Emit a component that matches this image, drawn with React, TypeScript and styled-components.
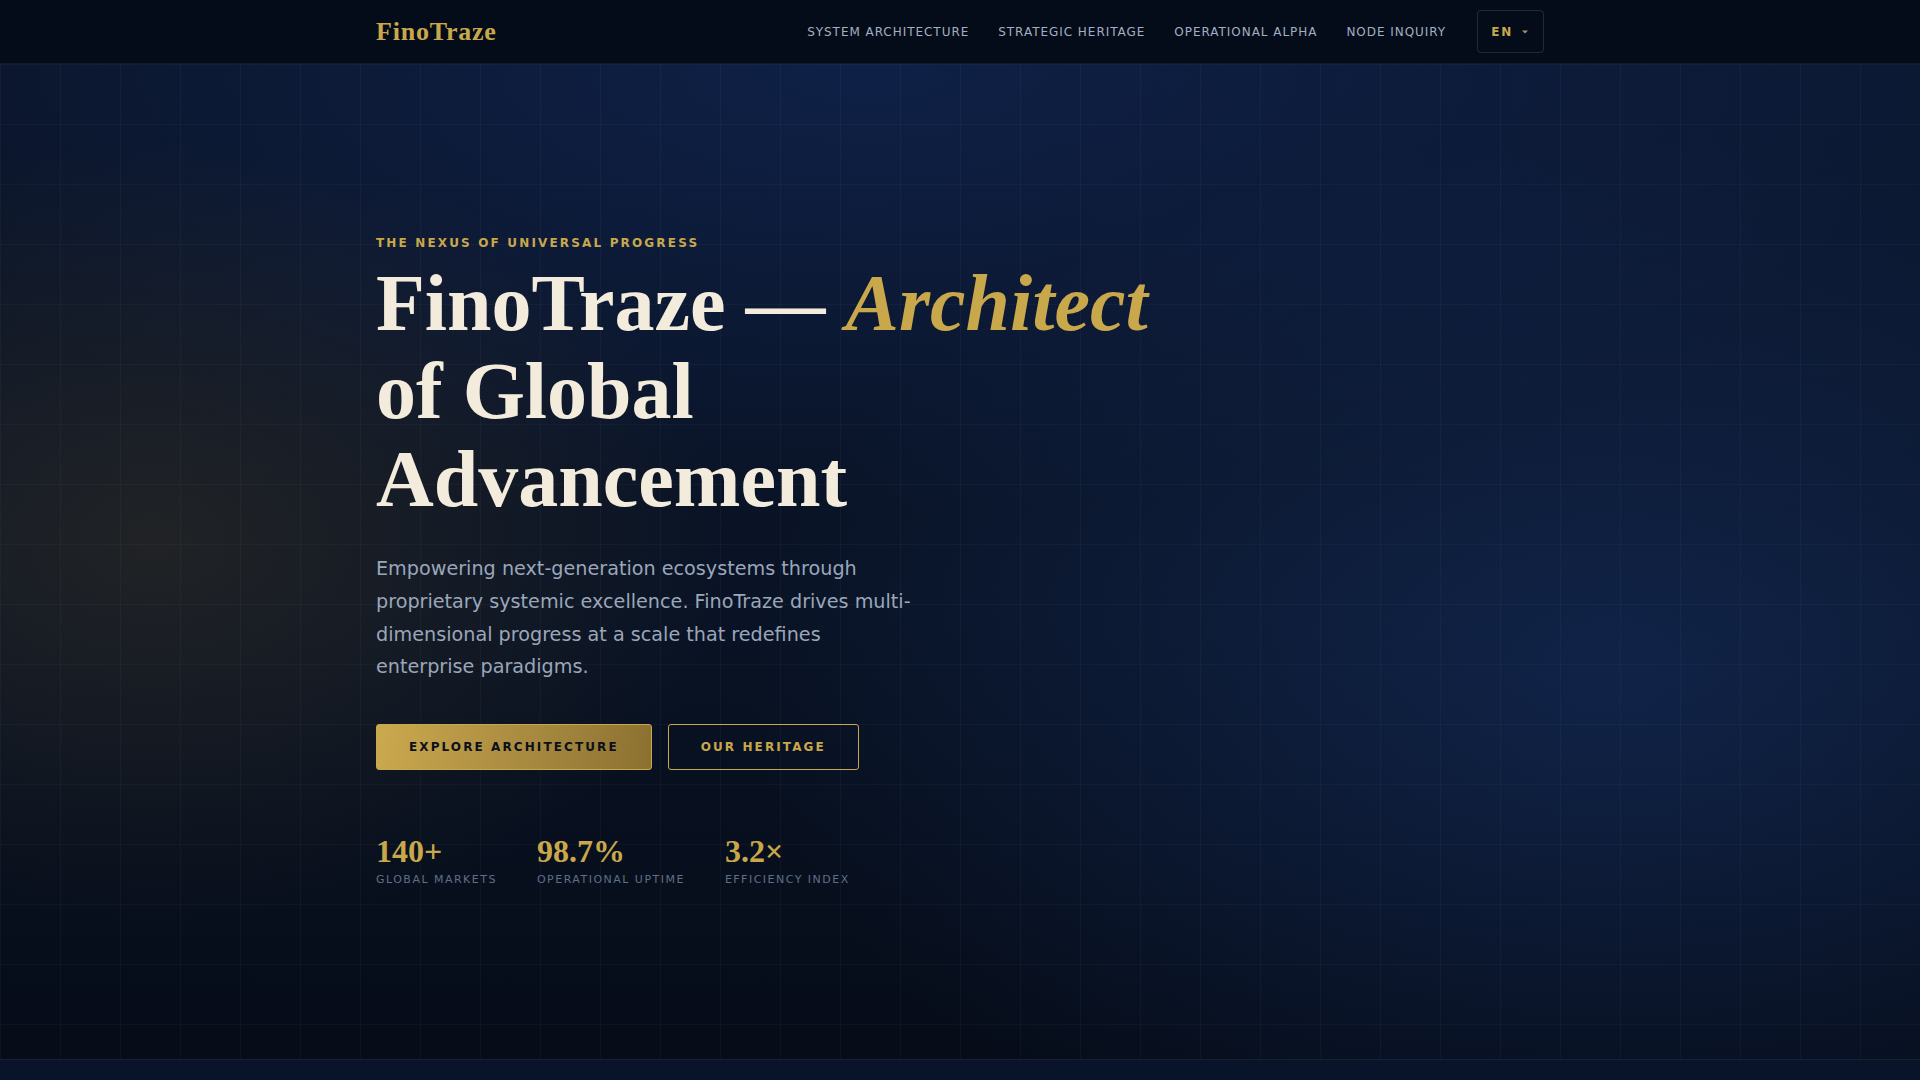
import React from 'react';
import styled, { createGlobalStyle } from 'styled-components';

const GlobalStyle = createGlobalStyle`
    * { box-sizing: border-box; }
    body {
        margin: 0;
        background: #050b16;
        font-family: "DejaVu Sans", Verdana, sans-serif;
    }
`

const GOLD = '#c9a84c';
const CREAM = '#f3ebdb';

const stats = [
    { value: '140+', label: 'Global Markets' },
    { value: '98.7%', label: 'Operational Uptime' },
    { value: '3.2×', label: 'Efficiency Index' },
];

const navLinks = ['System Architecture', 'Strategic Heritage', 'Operational Alpha', 'Node Inquiry'];

export default function App() {
    return (
        <Page>
            <GlobalStyle />
            <Header>
                <HeaderInner>
                    <Logo>FinoTraze</Logo>
                    <NavGroup>
                        <Nav>
                            {navLinks.map((link) => (
                                <NavLink key={link}>{link}</NavLink>
                            ))}
                        </Nav>
                        <LangButton>
                            EN
                            <svg width="6" height="4" viewBox="0 0 6 4">
                                <path d="M0 0.5h6L3 3.5z" fill="#a8926a" />
                            </svg>
                        </LangButton>
                    </NavGroup>
                </HeaderInner>
            </Header>

            <Hero>
                <Container>
                    <Eyebrow>The Nexus of Universal Progress</Eyebrow>
                    <Title>
                        FinoTraze — <Accent>Architect</Accent> of Global Advancement
                    </Title>
                    <Lead>
                        Empowering next-generation ecosystems through proprietary systemic excellence.
                        FinoTraze drives multi-dimensional progress at a scale that redefines enterprise paradigms.
                    </Lead>
                    <Actions>
                        <Button $primary>Explore Architecture</Button>
                        <Button>Our Heritage</Button>
                    </Actions>
                    <Stats>
                        {stats.map((s) => (
                            <Stat key={s.label}>
                                <StatValue>{s.value}</StatValue>
                                <StatLabel>{s.label}</StatLabel>
                            </Stat>
                        ))}
                    </Stats>
                </Container>
            </Hero>
            <NextSection />
        </Page>
    );
}

const Page = styled.div`
    min-height: 1080px;
    background: #050b16;
    overflow: hidden;
`
const Header = styled.header`
    height: 64px;
    background: #050c19;
    border-bottom: 1px solid rgba(255, 255, 255, 0.06);
`
const HeaderInner = styled.div`
    width: 1168px;
    height: 100%;
    margin: 0 auto;
    display: flex;
    align-items: center;
    justify-content: space-between;
`
const Logo = styled.div`
    font-family: "Liberation Serif", "Times New Roman", serif;
    font-weight: 700;
    font-size: 26px;
    letter-spacing: 0.03em;
    color: ${GOLD};
`
const NavGroup = styled.div`
    display: flex;
    align-items: center;
    gap: 31px;
`
const Nav = styled.nav`
    display: flex;
    align-items: center;
    gap: 29px;
`
const NavLink = styled.a`
    font-size: 12px;
    letter-spacing: 0.08em;
    text-transform: uppercase;
    color: #a3afc2;
    cursor: pointer;
`
const LangButton = styled.button`
    display: flex;
    align-items: center;
    gap: 9px;
    height: 43px;
    padding: 0 15px 0 13px;
    background: transparent;
    border: 1px solid rgba(255, 255, 255, 0.12);
    border-radius: 4px;
    font-family: "DejaVu Sans", sans-serif;
    font-size: 12px;
    font-weight: 700;
    letter-spacing: 0.15em;
    color: ${GOLD};
`
const Hero = styled.section`
    height: 995px;
    display: flex;
    align-items: center;
    background-color: #08101e;
    background-image:
        linear-gradient(rgba(160, 175, 200, 0.045) 1px, transparent 1px),
        linear-gradient(90deg, rgba(160, 175, 200, 0.045) 1px, transparent 1px),
        radial-gradient(ellipse 30% 40% at 8% 48%, rgba(74, 62, 38, 0.36), transparent 100%),
        radial-gradient(ellipse 45% 55% at 84% 62%, rgba(24, 52, 108, 0.5), transparent 100%),
        radial-gradient(ellipse 55% 45% at 45% 0%, rgba(18, 42, 96, 0.55), transparent 100%),
        radial-gradient(ellipse 40% 40% at 95% 5%, rgba(14, 32, 70, 0.4), transparent 100%),
        linear-gradient(180deg, #0b1529 0%, #091325 55%, #060c18 100%);
    background-size: 60px 60px, 60px 60px, auto, auto, auto, auto, auto;
`
const Container = styled.div`
    width: 1168px;
    margin: 0 auto;
`
const Eyebrow = styled.p`
    margin: 0 0 7px;
    font-size: 12px;
    line-height: 18px;
    font-weight: 700;
    letter-spacing: 0.18em;
    text-transform: uppercase;
    color: ${GOLD};
`
const Title = styled.h1`
    max-width: 800px;
    margin: 0;
    font-family: "Liberation Serif", "Times New Roman", serif;
    font-weight: 700;
    font-size: 80px;
    line-height: 1.1;
    color: ${CREAM};
`
const Accent = styled.em`
    color: ${GOLD};
    font-style: italic;
`
const Lead = styled.p`
    max-width: 540px;
    margin: 30px 0 0;
    font-size: 19.2px;
    line-height: 1.7;
    color: #9aa6ba;
`
const Actions = styled.div`
    display: flex;
    gap: 16px;
    margin-top: 40px;
`
const Button = styled.button<{ $primary?: boolean }>`
    height: 46px;
    padding: 0 32px;
    border-radius: 3px;
    border: 1px solid ${GOLD};
    background: ${(p) => (p.$primary ? 'linear-gradient(100deg, #cba94e 0%, #a88a40 55%, #8c7030 100%)' : 'transparent')};
    color: ${(p) => (p.$primary ? '#0b1019' : GOLD)};
    font-family: "DejaVu Sans", sans-serif;
    font-size: 12px;
    font-weight: 700;
    letter-spacing: 0.175em;
    text-transform: uppercase;
    cursor: pointer;
`
const Stats = styled.div`
    display: flex;
    gap: 40px;
    margin-top: 62px;
`
const Stat = styled.div`
    display: flex;
    flex-direction: column;
`
const StatValue = styled.span`
    font-family: "Liberation Serif", "Times New Roman", serif;
    font-weight: 700;
    font-size: 32px;
    line-height: 1.2;
    color: ${GOLD};
`
const StatLabel = styled.span`
    margin-top: 2px;
    font-size: 11px;
    line-height: 1.5;
    letter-spacing: 0.135em;
    text-transform: uppercase;
    color: #5f6f88;
`
const NextSection = styled.section`
    height: 21px;
    background: #09132a;
    border-top: 1px solid rgba(255, 255, 255, 0.06);
`
